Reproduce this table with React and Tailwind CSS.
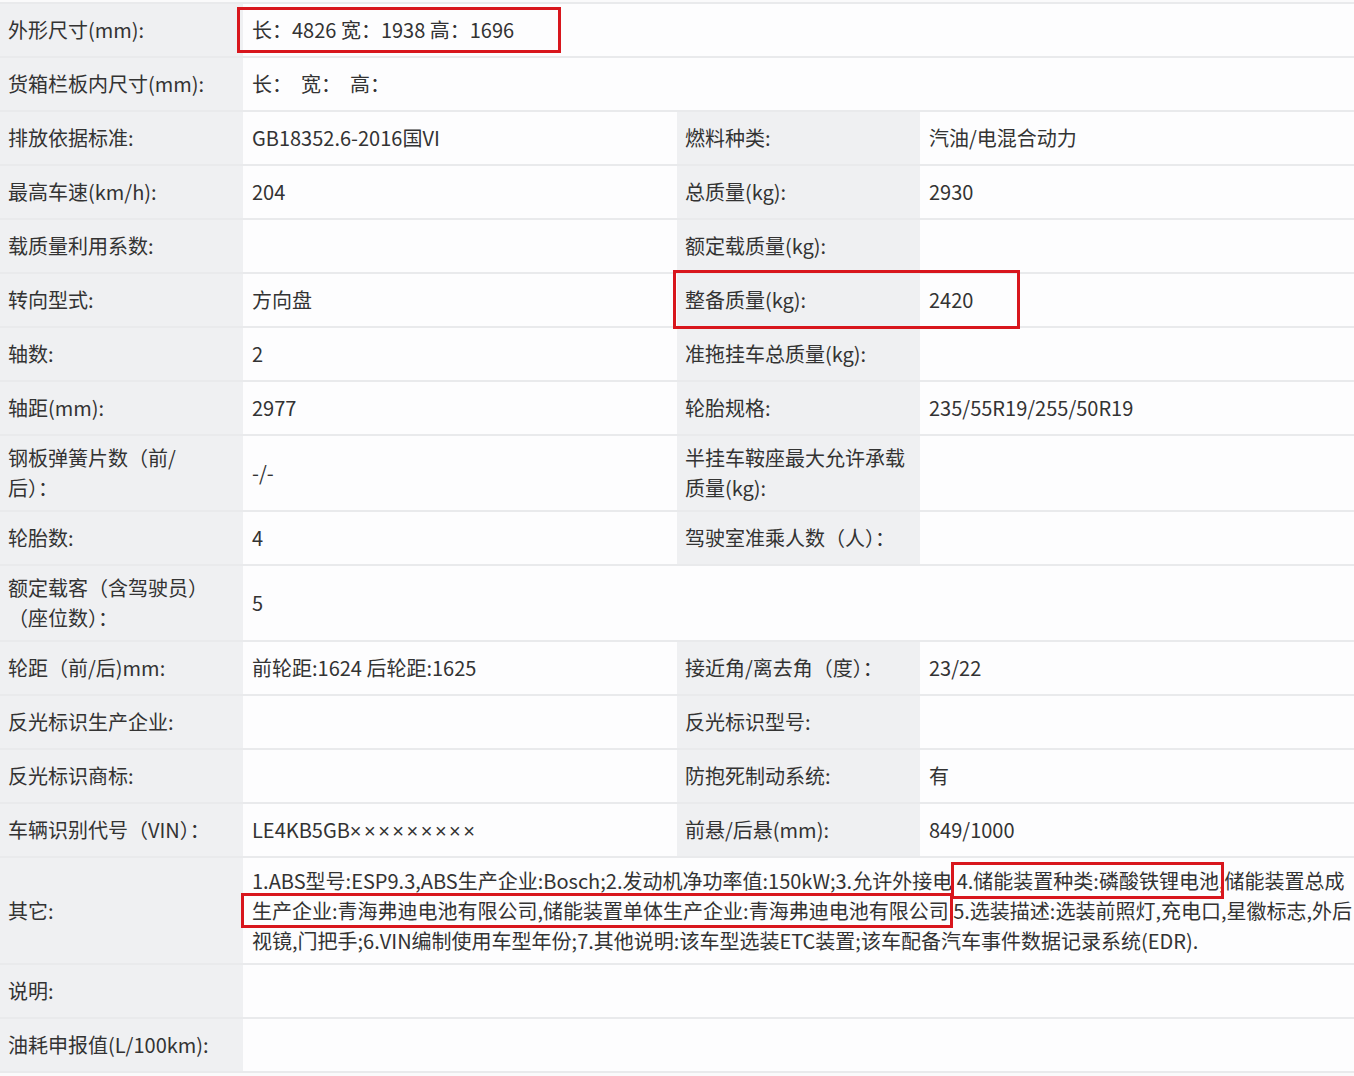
const rows = [
  { l: '外形尺寸(mm):', v: '长：4826 宽：1938 高：1696', span: true, box: 'top' },
  { l: '货箱栏板内尺寸(mm):', v: '长：  宽：  高：', span: true },
  { l: '排放依据标准:', v: 'GB18352.6-2016国VI', l2: '燃料种类:', v2: '汽油/电混合动力' },
  { l: '最高车速(km/h):', v: '204', l2: '总质量(kg):', v2: '2930' },
  { l: '载质量利用系数:', v: '', l2: '额定载质量(kg):', v2: '' },
  { l: '转向型式:', v: '方向盘', l2: '整备质量(kg):', v2: '2420', box: 'mass' },
  { l: '轴数:', v: '2', l2: '准拖挂车总质量(kg):', v2: '' },
  { l: '轴距(mm):', v: '2977', l2: '轮胎规格:', v2: '235/55R19/255/50R19' },
  { l: <>钢板弹簧片数（前/<br />后）：</>, v: '-/-', l2: '半挂车鞍座最大允许承载质量(kg):', v2: '', tall: true },
  { l: '轮胎数:', v: '4', l2: '驾驶室准乘人数（人）：', v2: '' },
  { l: '额定载客（含驾驶员）（座位数）：', v: '5', span: true, tall: true },
  { l: '轮距（前/后)mm:', v: '前轮距:1624 后轮距:1625', l2: '接近角/离去角（度）：', v2: '23/22' },
  { l: '反光标识生产企业:', v: '', l2: '反光标识型号:', v2: '' },
  { l: '反光标识商标:', v: '', l2: '防抱死制动系统:', v2: '有' },
  {
    l: '车辆识别代号（VIN）：',
    v: (
      <span>
        LE4KB5GB
        <span className="font-['Liberation_Sans',sans-serif] tracking-[2.5px]">×××××××××</span>
      </span>
    ),
    l2: '前悬/后悬(mm):',
    v2: '849/1000',
  },
  { l: '其它:', other: true },
  { l: '说明:', v: '', span: true },
  { l: '油耗申报值(L/100km):', v: '', span: true },
]

function Label({ children, h }) {
  return (
    <div className={`${h} flex items-center bg-[#eff0f2] pl-2 pr-2 text-[20px] leading-[30px] text-[#333]`}>
      <div>{children}</div>
    </div>
  )
}

function Value({ children, h, span }) {
  return (
    <div
      className={`${h} ${span ? 'col-span-3' : ''} relative flex items-center bg-[#fdfdfe] pl-[9px] pr-2 text-[20px] leading-[30px] text-[#333]`}
    >
      {children}
    </div>
  )
}

function RedBox({ className }) {
  return <span className={`pointer-events-none absolute border-[3px] border-[#d8161d] ${className}`} />
}

function Other() {
  return (
    <div className="text-[20px] leading-[30px] whitespace-nowrap">
      <div>
        1.ABS型号:ESP9.3,ABS生产企业:Bosch;2.发动机净功率值:150kW;3.允许外接电{' '}
        <span className="relative">
          4.储能装置种类:磷酸铁锂电池
          <RedBox className="-left-[6px] -right-[5px] -top-[4px] -bottom-[4px]" />
        </span>
        ,储能装置总成
      </div>
      <div>
        <span className="relative">
          生产企业:青海弗迪电池有限公司,储能装置单体生产企业:青海弗迪电池有限公司
          <RedBox className="-left-[11px] -right-[4px] -top-[3px] -bottom-[3px]" />
        </span>
        {' '}5.选装描述:选装前照灯,充电口,星徽标志,外后
      </div>
      <div>视镜,门把手;6.VIN编制使用车型年份;7.其他说明:该车型选装ETC装置;该车配备汽车事件数据记录系统(EDR).</div>
    </div>
  )
}

export default function App() {
  return (
    <div className="min-h-[1076px] w-[1354px] bg-[#fafafb] pt-[2px] font-['Noto_Sans_CJK_SC','Noto_Sans',sans-serif]">
      <div className="grid grid-cols-[243px_434px_243px_434px] gap-y-[2px] bg-[#e9eaec] py-[2px]">
        {rows.map((r, i) => {
          const h = r.other ? 'h-[105px]' : r.tall ? 'h-[74px]' : 'h-[52px]'
          if (r.other) {
            return [
              <Label key={i + 'l'} h={h}>{r.l}</Label>,
              <Value key={i + 'v'} h={h} span>
                <Other />
              </Value>,
            ]
          }
          if (r.span) {
            return [
              <Label key={i + 'l'} h={h}>{r.l}</Label>,
              <Value key={i + 'v'} h={h} span>
                <span className="whitespace-pre">{r.v}</span>
                {r.box === 'top' && <RedBox className="left-[-6px] top-[3px] h-[46px] w-[324px]" />}
              </Value>,
            ]
          }
          return [
            <Label key={i + 'l'} h={h}>{r.l}</Label>,
            <Value key={i + 'v'} h={h}>{r.v}</Value>,
            <div key={i + 'l2'} className={`${h} relative flex items-center bg-[#eff0f2] pl-2 pr-2 text-[20px] leading-[30px] text-[#333]`}>
              <div>{r.l2}</div>
              {r.box === 'mass' && <RedBox className="left-[-4px] top-[-4px] h-[59px] w-[347px] z-10" />}
            </div>,
            <Value key={i + 'v2'} h={h}>{r.v2}</Value>,
          ]
        })}
      </div>
    </div>
  )
}
